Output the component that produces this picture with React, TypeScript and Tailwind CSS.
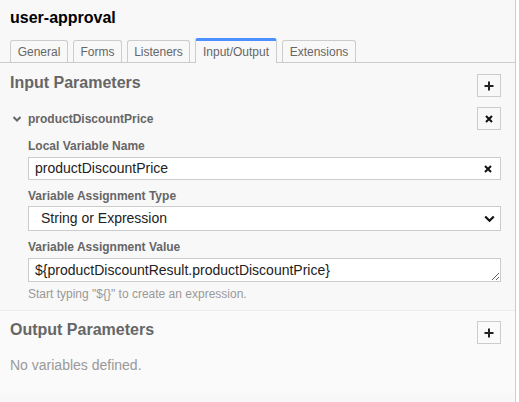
import React from "react";

const tabs = [
  { label: "General", w: "w-[58px]" },
  { label: "Forms", w: "w-[49px]" },
  { label: "Listeners", w: "w-[63px]" },
  { label: "Input/Output", w: "w-[82px]", active: true },
  { label: "Extensions", w: "w-[74px]" },
];

function PlusIcon() {
  return (
    <svg width="10" height="10" viewBox="0 0 10 10">
      <path d="M5 0.5V9.5M0.5 5H9.5" stroke="#222" strokeWidth="2" />
    </svg>
  );
}

function CloseIcon() {
  return (
    <svg width="8" height="8" viewBox="0 0 8 8">
      <path d="M1 1L7 7M7 1L1 7" stroke="#111" strokeWidth="2" />
    </svg>
  );
}

function IconButton({ children }: { children: React.ReactNode }) {
  return (
    <button className="w-[24px] h-[23px] border border-[#ccc] flex items-center justify-center shrink-0">
      {children}
    </button>
  );
}

function Label({ children, className = "" }: { children: React.ReactNode; className?: string }) {
  return (
    <div className={"text-[12px] leading-[14px] font-bold text-[#666] " + className}>{children}</div>
  );
}

export default function App() {
  return (
    <div
      className="w-[516px] min-h-[402px] bg-[#f8f8f8] border-r border-[#ccc] text-[#222]"
      style={{ fontFamily: '"Liberation Sans", Arial, sans-serif' }}
    >
      {/* title */}
      <div className="h-[37px] pl-[10px] pt-[8px]">
        <h1 className="text-[16px] leading-[20px] font-bold text-black">user-approval</h1>
      </div>

      {/* tabs */}
      <div className="h-[26px] border-b border-[#ccc] pl-[10px] flex items-end gap-[5px]">
        {tabs.map((t) =>
          t.active ? (
            <div
              key={t.label}
              className={
                t.w +
                " h-[25px] -mb-px bg-[#f8f8f8] border-x border-[#ccc] border-t-[3px] border-t-[#4d90ff] rounded-t-[3px] text-[12px] text-[#666] flex items-center justify-center pb-[1px]"
              }
            >
              {t.label}
            </div>
          ) : (
            <div
              key={t.label}
              className={
                t.w +
                " h-[22px] border border-b-0 border-[#ccc] rounded-t-[3px] text-[12px] text-[#666] flex items-center justify-center"
              }
            >
              {t.label}
            </div>
          )
        )}
      </div>

      {/* input parameters */}
      <div className="pl-[10px] pr-[14px] pt-[9px] pb-[9px] border-b border-[#eee]">
        <div className="flex items-start justify-between">
          <h2 className="text-[16px] leading-[20px] font-bold text-[#666] mt-[1px]">Input Parameters</h2>
          <div className="mt-[2px]">
            <IconButton>
              <PlusIcon />
            </IconButton>
          </div>
        </div>

        <div className="mt-[10px] flex items-center justify-between h-[23px]">
          <div className="flex items-center">
            <svg width="18" height="10" viewBox="0 0 18 10">
              <path d="M3.5 3L7 6.5L10.5 3" stroke="#666" strokeWidth="2" fill="none" />
            </svg>
            <span className="text-[12px] font-bold text-[#666]">productDiscountPrice</span>
          </div>
          <IconButton>
            <CloseIcon />
          </IconButton>
        </div>

        <div className="pl-[18px]">
          <Label className="mt-[9px]">Local Variable Name</Label>
          <div className="mt-[4px] h-[23px] bg-white border border-[#ccc] flex items-center justify-between pl-[6px] pr-[8px]">
            <span className="text-[14px]">productDiscountPrice</span>
            <CloseIcon />
          </div>

          <Label className="mt-[9px]">Variable Assignment Type</Label>
          <div className="mt-[3px] h-[25px] bg-white border border-[#ccc] flex items-center justify-between pl-[12px] pr-[5px]">
            <span className="text-[14px]">String or Expression</span>
            <svg width="11" height="8" viewBox="0 0 11 8">
              <path d="M1.2 1.5L5.5 5.8L9.8 1.5" stroke="#111" strokeWidth="2.2" fill="none" />
            </svg>
          </div>

          <Label className="mt-[9px]">Variable Assignment Value</Label>
          <textarea
            readOnly
            rows={1}
            value="${productDiscountResult.productDiscountPrice}"
            className="mt-[4px] block w-full h-[24px] bg-white border border-[#ccc] text-[14px] leading-[16px] pl-[6px] pt-[3px] overflow-hidden resize-y outline-none"
            style={{ fontFamily: '"Liberation Sans", Arial, sans-serif' }}
          />
          <div className="mt-[5px] text-[12px] leading-[14px] text-[#999]">
            Start typing "{"${}"}" to create an expression.
          </div>
        </div>
      </div>

      {/* output parameters */}
      <div className="pl-[10px] pr-[14px] pt-[8px] bg-[#fafafa] pb-[20px]">
        <div className="flex items-start justify-between">
          <h2 className="text-[16px] leading-[20px] font-bold text-[#666] mt-[1px]">Output Parameters</h2>
          <div className="mt-[2px]">
            <IconButton>
              <PlusIcon />
            </IconButton>
          </div>
        </div>
        <div className="mt-[13px] text-[14px] leading-[16px] text-[#999]">No variables defined.</div>
      </div>
    </div>
  );
}
